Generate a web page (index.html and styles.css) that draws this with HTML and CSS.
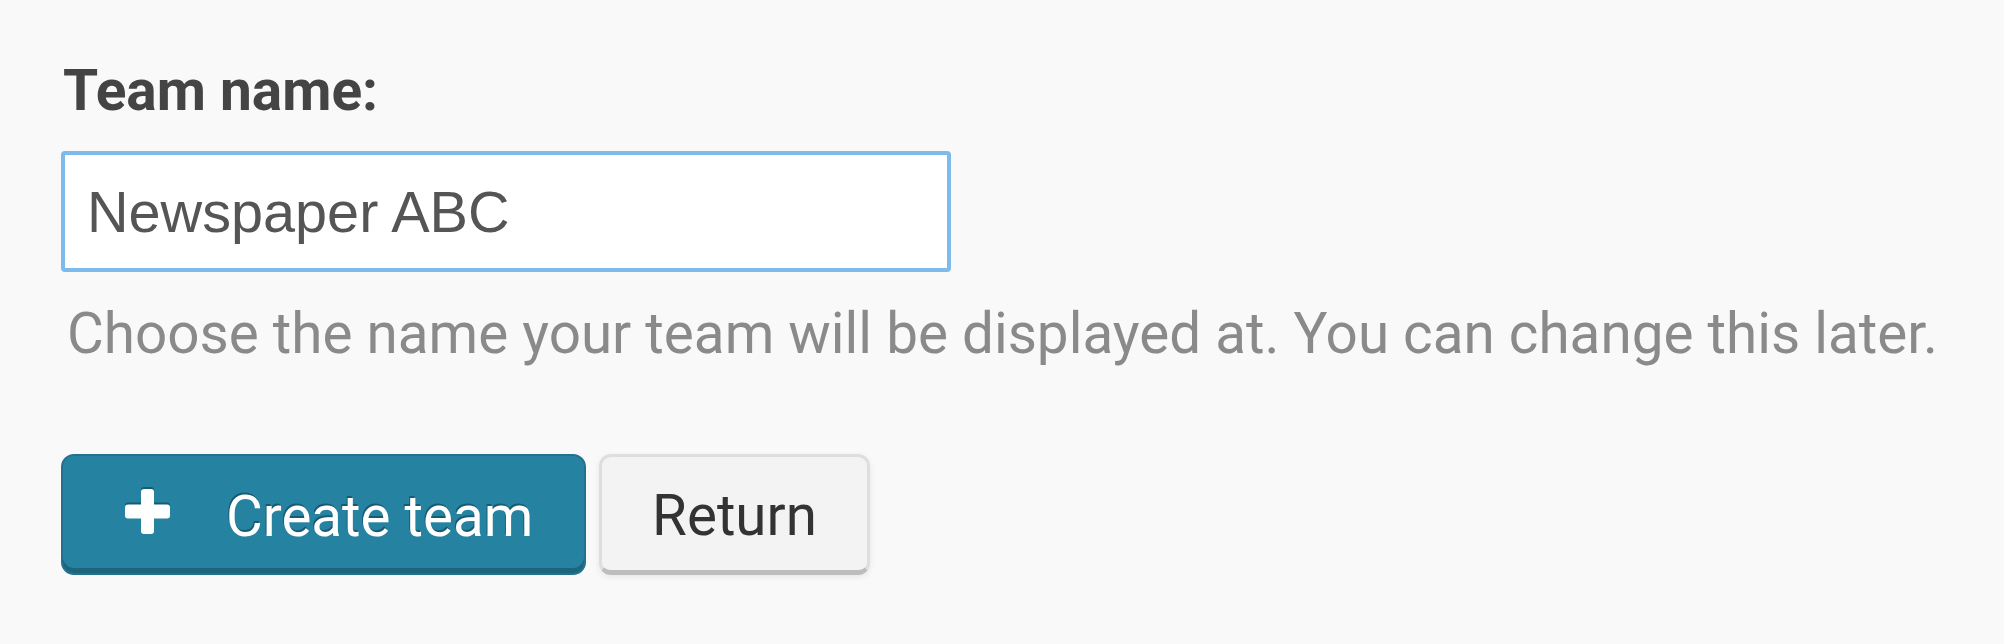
FILE: index.html
```html
<!DOCTYPE html>
<html>
<head>
<meta charset="utf-8">
<link rel="stylesheet" href="styles.css">
</head>
<body>
<form class="form">
  <label class="label" for="team">Team name:</label>
  <input class="input" id="team" type="text" value="Newspaper ABC">
  <p class="help">Choose the name your team will be displayed at. You can change this later.</p>
  <div class="actions">
    <button type="button" class="btn btn-primary">
      <svg class="plus" width="45" height="45" viewBox="0 0 45 45"><rect x="16" y="0" width="13" height="45" rx="3" fill="#fff"/><rect x="0" y="15.5" width="45" height="14" rx="3" fill="#fff"/></svg>
      <span>Create team</span>
    </button>
    <button type="button" class="btn btn-default">Return</button>
  </div>
</form>
</body>
</html>
```
FILE: styles.css
```css
html, body {
  margin: 0;
  background: #f9f9f9;
}
body {
  font-family: Roboto, "Liberation Sans", sans-serif;
  width: 2004px;
  height: 644px;
  overflow: hidden;
}
.form {
  padding: 59px 0 0 61px;
  display: flex;
  flex-direction: column;
  align-items: flex-start;
}
.label {
  display: block;
  font-weight: 700;
  font-size: 56.8px;
  line-height: 64px;
  color: #444;
  padding-left: 2px;
}
.input {
  box-sizing: border-box;
  margin: 28px 0 0 0;
  width: 890px;
  height: 121px;
  border: 4px solid #7cbbeb;
  border-radius: 4px;
  background: #fff;
  padding: 0 0 0 22px;
  font-family: "Liberation Sans", Arial, sans-serif;
  font-size: 57.6px;
  color: #555;
  outline: none;
}
.help {
  margin: 22px 0 0 0;
  padding-left: 6px;
  font-size: 56.6px;
  line-height: 80px;
  color: #8a8a8a;
}
.actions {
  margin-top: 80px;
  display: flex;
  gap: 13px;
}
.btn {
  box-sizing: border-box;
  height: 121px;
  display: inline-flex;
  align-items: center;
  font-family: Roboto, "Liberation Sans", sans-serif;
  font-size: 56.5px;
  padding: 4px 0 0 0;
  cursor: pointer;
}
.btn-primary {
  width: 525px;
  background: #2582a1;
  color: #fff;
  border: 2px solid #22718d;
  border-radius: 13px;
  box-shadow: inset 0 -5px 0 rgba(0, 0, 0, 0.22);
  padding-left: 62px;
  text-shadow: -1px -2px 0 rgba(0, 0, 0, 0.3);
}
.plus {
  margin-top: -10px;
  margin-right: 56px;
  filter: drop-shadow(0 -2px 0 rgba(0, 0, 0, 0.3));
}
.btn-default {
  width: 271px;
  height: 121px;
  justify-content: center;
  background: #f3f3f3;
  color: #333;
  border: 3px solid #dedede;
  border-bottom: 5px solid #bdbdbd;
  border-radius: 12px;
  box-shadow: 0 2px 6px rgba(0, 0, 0, 0.08);
}
```
